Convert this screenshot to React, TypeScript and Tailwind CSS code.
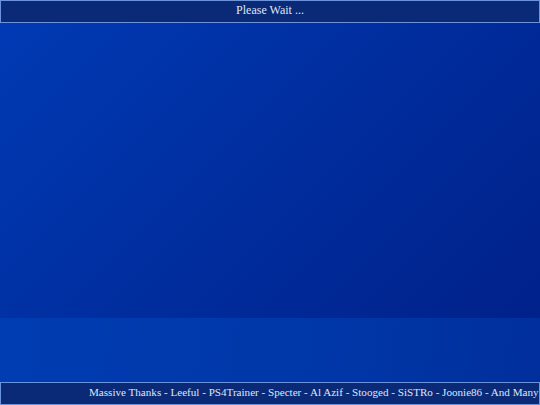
export default function App() {
  const thanks =
    "Massive Thanks - Leeful - PS4Trainer - Specter - Al Azif - Stooged - SiSTRo - Joonie86 - And Many More";

  return (
    <div className="flex h-[405px] w-[540px] flex-col overflow-hidden bg-[#0030a0] font-[family-name:'Liberation_Serif',serif] text-[#dfe6f5]">
      {/* status bar */}
      <div className="flex h-[23px] shrink-0 items-center justify-center border border-[#6d93dc] bg-[#0a2a78] pb-[3px] text-[12px]">
        Please Wait ...
      </div>

      {/* main area */}
      <div className="h-[295px] shrink-0 bg-[linear-gradient(135deg,#003ab4_0%,#002c9c_55%,#00218a_100%)]" />

      {/* lower band */}
      <div className="h-[64px] shrink-0 bg-[linear-gradient(100deg,#003db2_0%,#0037a8_60%,#002f9c_100%)]" />

      {/* credits ticker */}
      <div className="flex h-[23px] shrink-0 items-center overflow-hidden whitespace-nowrap border border-[#6d93dc] bg-[#0a2a78] pb-[2px] pl-[88px] text-[11.1px]">
        {thanks}
      </div>
    </div>
  );
}
